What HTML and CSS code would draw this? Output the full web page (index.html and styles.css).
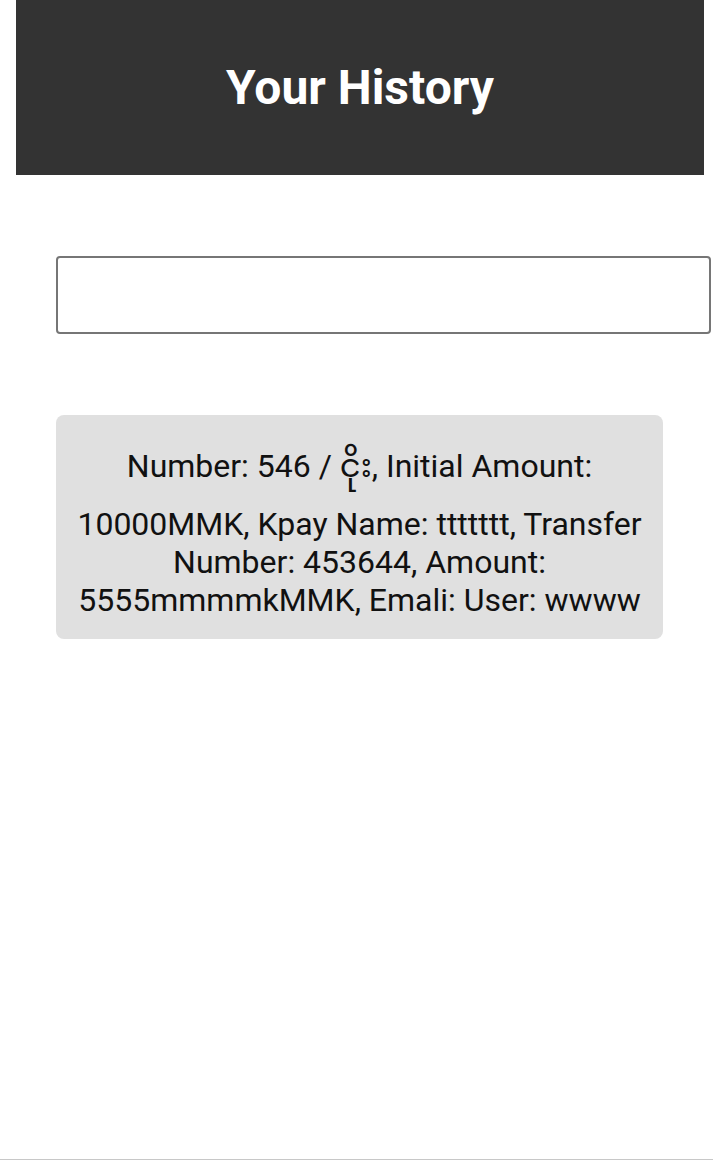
FILE: index.html
```html
<!DOCTYPE html>
<html lang="en">
<head>
<meta charset="utf-8">
<title>Your History</title>
<link rel="stylesheet" href="styles.css">
</head>
<body>
<div class="page">
  <header class="header">
    <h1 class="title">Your History</h1>
  </header>
  <main class="content">
    <input class="search" type="text">
    <div class="list">
      <div class="card">
        <p class="entry">Number: 546 / <span class="mm">ငိုး</span>, Initial Amount: 10000MMK, Kpay Name: ttttttt, Transfer Number: 453644, Amount: 5555mmmmkMMK, Emali: User: wwww</p>
      </div>
    </div>
  </main>
  <footer class="footer"></footer>
</div>
</body>
</html>
```

FILE: styles.css
```css
html, body {
  margin: 0;
  padding: 0;
  background: #ffffff;
}
body {
  font-family: Roboto, "Noto Sans", "Noto Sans Myanmar", "Liberation Sans", sans-serif;
  color: #111111;
}
.page {
  min-height: 1168px;
  display: flex;
  flex-direction: column;
  width: 713px;
}
.header {
  margin: 0 9px 0 16px;
  height: 175px;
  background: #333333;
  display: flex;
  align-items: center;
  justify-content: center;
}
.title {
  margin: 0;
  color: #ffffff;
  font-size: 48px;
  font-weight: 700;
  padding-bottom: 1px;
}
.content {
  flex: 1;
  padding: 81px 2px 0 56px;
  display: flex;
  flex-direction: column;
}
.search {
  box-sizing: border-box;
  width: 655px;
  height: 78px;
  border: 2px solid #767676;
  border-radius: 4px;
  background: #ffffff;
  margin: 0;
  padding: 0 12px;
  font-size: 24px;
}
.list {
  margin-top: 81px;
}
.card {
  width: 607px;
  box-sizing: border-box;
  background: #e0e0e0;
  border-radius: 8px;
  padding: 20px 20px 20px;
}
.entry {
  margin: 0;
  text-align: center;
  font-size: 32px;
  line-height: normal;
  color: #111111;
}
.footer {
  height: 8px;
  border-top: 1px solid #c8c8c8;
}
```
